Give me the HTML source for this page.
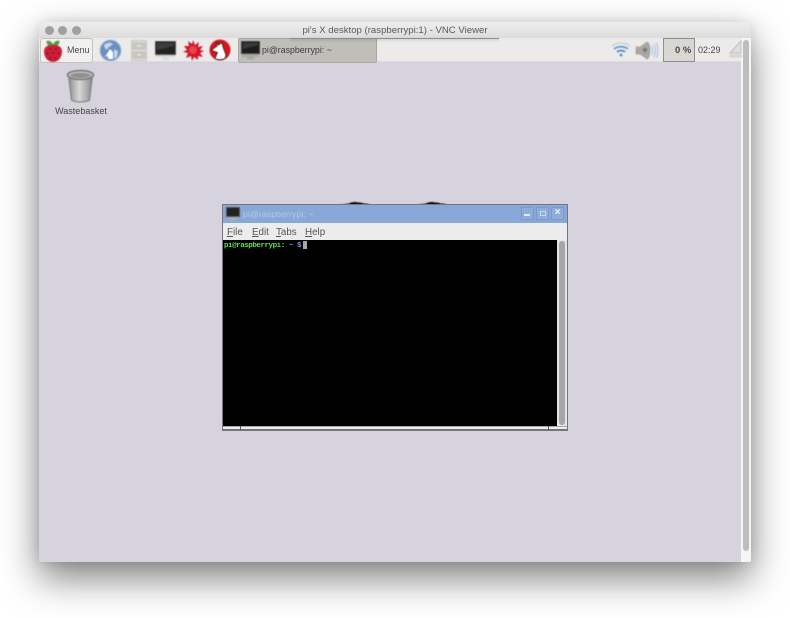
<!DOCTYPE html>
<html><head><meta charset="utf-8"><style>
html,body{margin:0;padding:0;background:#fff;width:790px;height:618px;overflow:hidden}
body{font-family:"Liberation Sans",sans-serif;position:relative}
.a{position:absolute}
svg.a{filter:blur(.45px)}
.t{position:absolute;white-space:nowrap;filter:blur(.35px)}
u{text-decoration:underline}
</style></head><body>
<div class="a" style="left:39px;top:22px;width:712px;height:540px;border-radius:5px 5px 2px 2px;background:#d6d3de;box-shadow:0 16px 38px rgba(0,0,0,.5),0 0 12px rgba(0,0,0,.1);overflow:hidden">
  <div class="a" style="left:0;top:0;width:712px;height:16px;background:linear-gradient(#eeeeee,#dcdcdc)"></div>
  <div class="a" style="left:0;top:16px;width:702px;height:24px;background:#ecebe9;border-bottom:1px solid #dcdbe0;box-sizing:border-box"></div>
  <div class="a" style="left:702px;top:16px;width:10px;height:524px;background:#f6f6f6"></div>
  <div class="a" style="left:704px;top:18px;width:6px;height:511px;border-radius:3px;background:#bdbdbd"></div>
</div>
<div class="a" style="left:44.500px;top:25.500px;width:9px;height:9px;border-radius:50%;background:#a0a0a0"></div>
<div class="a" style="left:58px;top:25.500px;width:9px;height:9px;border-radius:50%;background:#a0a0a0"></div>
<div class="a" style="left:71.500px;top:25.500px;width:9px;height:9px;border-radius:50%;background:#a0a0a0"></div>
<div class="t" style="left:295px;width:200px;text-align:center;top:24px;font-size:9.600px;line-height:13px;color:#5a5a5a">pi's X desktop (raspberrypi:1) - VNC Viewer</div>

<div class="a" style="left:40px;top:38px;width:53px;height:25px;box-sizing:border-box;border:1px solid #c2c2be;border-radius:3px;background:#f1f0ee"></div>
<svg class="a" style="left:42px;top:38px" width="22" height="25" viewBox="0 0 22 25">
  <path d="M4.500 3c3-1 5.500 1 6.500 3.500C12 4 14.500 2 17.500 3c0 3.500-2.500 6-6.500 6S4.500 6.500 4.500 3z" fill="#4f9a3c"/>
  <path d="M11 7c6 0 9 2 9 6.500 0 6-4 10.500-9 10.500s-9-4.500-9-10.500C2 9 5 7 11 7z" fill="#cc2038"/>
  <g fill="#8d0f26"><circle cx="8" cy="11" r="1"/><circle cx="14" cy="11" r="1"/><circle cx="5.500" cy="15.500" r="1"/><circle cx="11" cy="15" r="1"/><circle cx="16.500" cy="15.500" r="1"/><circle cx="8.500" cy="20" r="1"/><circle cx="13.500" cy="20" r="1"/></g>
</svg>
<div class="t" style="left:67px;top:44px;font-size:9px;line-height:13px;color:#4a4a4a">Menu</div>

<svg class="a" style="left:99px;top:39px" width="23" height="23" viewBox="0 0 23 23">
  <circle cx="11.500" cy="11.500" r="10.500" fill="#6b90bf" stroke="#a9bfd8"/>
  <path d="M5 6c3-3 7-3 9-1-2 2-5 3-6 6-1-1-3-2-3-5zM15 10l4 2-1 6-3 2z" fill="#c4d6e8"/>
  <path d="M6 18l5-8 3 3v7H9v-3z" fill="#fff"/>
</svg>
<svg class="a" style="left:131px;top:40px" width="16" height="21" viewBox="0 0 16 21">
  <rect x=".5" y=".5" width="15" height="20" rx="1" fill="#dbdad6" stroke="#c6c5c0"/>
  <rect x="2" y="3" width="12" height="6" fill="#c8c7c2" stroke="#b5b4af" stroke-width=".5"/>
  <rect x="2" y="12" width="12" height="6" fill="#c8c7c2" stroke="#b5b4af" stroke-width=".5"/>
  <rect x="6" y="5" width="4" height="1.500" fill="#e6e6e2"/><rect x="6" y="14" width="4" height="1.500" fill="#e6e6e2"/>
</svg>
<svg class="a" style="left:155px;top:41px" width="21" height="20" viewBox="0 0 21 20">
  <rect x=".5" y=".5" width="20" height="13" fill="#222" stroke="#555"/>
  <path d="M2 2h17v3L2 9z" fill="#3d3d3d"/>
  <rect x="1" y="14" width="19" height="2" fill="#d6d6d6"/>
  <rect x="7" y="16" width="7" height="3" fill="#dcdcdc"/>
</svg>
<svg class="a" style="left:182px;top:39px" width="22" height="22" viewBox="0 0 22 22">
  <path d="M11 1l2 5 4-3-1 5 5-1-3 4 4 1-4 2 3 4-5-1 0 4-4-3-2 4-1-5-5 2 2-5-5-1 4-2-3-4 5 0-1-5 4 3z" fill="#d5142a"/>
  <circle cx="11" cy="11" r="4" fill="#e0474f"/>
</svg>
<svg class="a" style="left:209px;top:39px" width="22" height="22" viewBox="0 0 22 22">
  <circle cx="11" cy="11" r="10.500" fill="#d9141f"/>
  <path d="M8 3l1.500 3L13 3.500 14 8l3 8-1 3.500c-3 1.500-8 1.500-10 0l2.500-6L4 12l-1-1.500 5-3.500z" fill="#fff" stroke="#222" stroke-width=".8"/>
</svg>

<div class="a" style="left:238px;top:38px;width:139px;height:25px;box-sizing:border-box;border:1px solid #a8a7a2;border-radius:2px;background:#bfbeb9"></div>
<div class="a" style="left:290px;top:37.500px;width:209px;height:1px;background:#8e8e8e;box-shadow:0 1px 2px rgba(0,0,0,.25)"></div>
<svg class="a" style="left:241px;top:41px" width="19" height="19" viewBox="0 0 19 19">
  <rect x=".5" y=".5" width="18" height="12" fill="#1d1d1d" stroke="#444"/>
  <path d="M2 2h15v2L2 8z" fill="#3a3a3a"/>
  <rect x="1" y="13" width="17" height="3" fill="#a9a8a3"/>
  <rect x="6" y="16" width="7" height="2.500" fill="#a9a8a3"/>
</svg>
<div class="t" style="left:262px;top:44px;font-size:8.800px;line-height:13px;color:#3d3d3d">pi@raspberrypi: ~</div>

<svg class="a" style="left:611px;top:41px" width="20" height="17" viewBox="0 0 20 17" fill="none">
  <path d="M1 5c5-4 13-4 18 0" stroke="#cfcfcf" stroke-width="1.500"/>
  <path d="M3 8c4-3 10-3 14 0" stroke="#5d9ad6" stroke-width="1.700"/>
  <path d="M6 11c2-2 6-2 8 0" stroke="#4b8dd0" stroke-width="1.700"/>
  <circle cx="10" cy="14" r="1.400" fill="#4b8dd0"/>
</svg>
<svg class="a" style="left:635px;top:41px" width="25" height="19" viewBox="0 0 25 19" fill="none">
  <path d="M1 6h4l7-5c2 0 3 4 3 8s-1 9-3 9l-7-5H1z" fill="#a8a8a4" stroke="#8d8d89" stroke-width=".5"/>
  <circle cx="10" cy="9" r="2.200" fill="#7c7c78"/>
  <path d="M17 5c1 3 1 6 0 9M19 3c2 4 2 9 0 13M21.500 2c2 5 2 10 0 15" stroke="#9dbde0" stroke-width="1"/>
</svg>
<div class="a" style="left:663px;top:38px;width:32px;height:24px;box-sizing:border-box;border:1px solid #8e8e8c;background:#d8d7d4"></div>
<div class="t" style="left:675px;top:45px;font-size:9.500px;line-height:12px;font-weight:bold;color:#4a4a4a">0 %</div>
<div class="t" style="left:698px;top:44px;font-size:9px;line-height:13px;color:#4a4a4a">02:29</div>
<svg class="a" style="left:729px;top:40px" width="13" height="19" viewBox="0 0 13 19" fill="none">
  <path d="M1 13L12 1v12z" fill="#e0e0dc" stroke="#bbb"/>
  <rect x="1" y="15" width="12" height="2" fill="#dcdcd8" stroke="#bbb" stroke-width=".5"/>
</svg>

<svg class="a" style="left:66px;top:69px" width="30" height="34" viewBox="0 0 30 34">
  <defs><linearGradient id="g" x1="0" x2="1"><stop offset="0" stop-color="#8d8d8d"/><stop offset=".45" stop-color="#d8d8d8"/><stop offset="1" stop-color="#8a8a8a"/></linearGradient></defs>
  <path d="M2.500 6l3 25c3 2.500 15 2.500 18 0l3-25z" fill="url(#g)" stroke="#777"/>
  <ellipse cx="14.500" cy="6" rx="13" ry="4.500" fill="#bdbdbd" stroke="#777" stroke-width="1.500"/>
  <ellipse cx="14.500" cy="6.500" rx="10" ry="2.500" fill="#8f8f8f"/>
</svg>
<div class="t" style="left:41px;width:80px;text-align:center;top:105px;font-size:9px;line-height:13px;color:#444">Wastebasket</div>

<svg class="a" style="left:335px;top:199px" width="120" height="7" viewBox="0 0 120 7">
  <path d="M3 6c5-1 8-1 11-1.500 2-1.500 3-1 5-1.500 2-.5 3 .5 5 .5 3 0 4 1 6 1 3 0 5 1 7 2zM80 6c5-1 8-1 11-1.500 2-1.500 3-1 5-1.500 2-.5 3 .5 5 .5 3 0 4 1 6 1 3 0 5 1 8 2z" fill="#111"/>
</svg>

<div class="a" style="left:222px;top:204px;width:346px;height:227px;box-sizing:border-box;border:1px solid #74747a;border-bottom-width:2px;background:#ececec"></div>
<div class="a" style="left:223px;top:205px;width:344px;height:18px;background:#88a9d8"></div>
<svg class="a" style="left:226px;top:207px" width="14" height="14" viewBox="0 0 14 14">
  <rect x=".5" y=".5" width="13" height="9" fill="#222" stroke="#555"/>
  <rect x="1" y="10" width="12" height="1.500" fill="#a6aebb"/><rect x="4" y="11.500" width="6" height="2" fill="#a6aebb"/>
</svg>
<div class="t" style="left:243px;top:208px;font-size:8.700px;line-height:12px;color:#b4c8e6;letter-spacing:.1px">pi@raspberrypi: ~</div>
<div class="a" style="left:521px;top:207px;width:11px;height:11px;border:1px solid #7a9acb;background:#8eadda"></div>
<div class="a" style="left:524px;top:214px;width:6px;height:1.500px;background:#dfe7f3"></div>
<div class="a" style="left:536px;top:207px;width:11px;height:11px;border:1px solid #7a9acb;background:#8eadda"></div>
<div class="a" style="left:540px;top:211px;width:4px;height:3px;border:1px solid #c9d7ec"></div>
<div class="a" style="left:551px;top:207px;width:11px;height:11px;border:1px solid #7a9acb;background:#8eadda"></div>
<div class="t" style="left:551px;top:206px;width:13px;text-align:center;font-size:10px;line-height:13px;font-weight:bold;color:#eef2f8">×</div>

<div class="t" style="left:227px;top:226px;font-size:9.800px;line-height:13px;color:#555"><u>F</u>ile</div>
<div class="t" style="left:252px;top:226px;font-size:9.800px;line-height:13px;color:#555"><u>E</u>dit</div>
<div class="t" style="left:276px;top:226px;font-size:9.800px;line-height:13px;color:#555"><u>T</u>abs</div>
<div class="t" style="left:305px;top:226px;font-size:9.800px;line-height:13px;color:#555"><u>H</u>elp</div>

<div class="a" style="left:223px;top:240px;width:334px;height:186px;background:#000"></div>
<div class="t" style="left:224px;top:241px;font-family:'Liberation Mono',monospace;font-size:7.500px;line-height:10px;font-weight:bold;color:#5de04a;letter-spacing:-.45px">pi@raspberrypi<span style="color:#ccc">:</span> <span style="color:#7c8ee0">~ $</span></div>
<div class="a" style="left:303px;top:241px;width:4px;height:8px;background:#a8a8a8"></div>
<div class="a" style="left:557px;top:240px;width:10px;height:186px;background:#e4e4e4"></div>
<div class="a" style="left:559px;top:241px;width:6px;height:184px;border-radius:3px;background:#a6a6a6"></div>
<div class="a" style="left:223px;top:426px;width:344px;height:1px;background:#a9a9a9"></div>
<div class="a" style="left:240px;top:426px;width:1px;height:4px;background:#555"></div>
<div class="a" style="left:548px;top:426px;width:1px;height:4px;background:#555"></div>
</body></html>
